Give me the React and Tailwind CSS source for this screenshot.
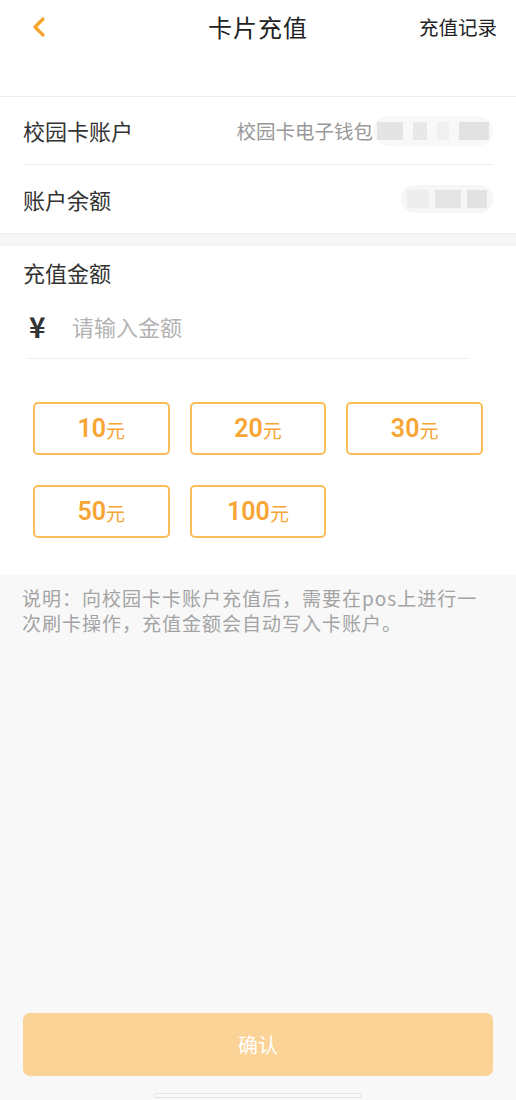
import React, { useState } from "react";

const amounts = [10, 20, 30, 50, 100];

const App = () => {
  const [amount, setAmount] = useState("");

  return (
    <div
      className="w-[516px] h-[1100px] bg-[#f8f8f8] flex flex-col"
      style={{ fontFamily: '"Noto Sans CJK SC", "Noto Sans", sans-serif' }}
    >
      {/* Header */}
      <div className="bg-white h-[97px] border-b border-[#eeeeee] flex items-start pt-[8px] px-[22px]">
        <div className="relative w-full h-[38px] flex items-center justify-center">
          <button className="absolute left-[8px] top-[8px]">
            <svg width="18" height="22" viewBox="0 0 18 22" fill="none">
              <path
                d="M13 3L5 11l8 8"
                stroke="#f5a32c"
                strokeWidth="3.2"
                strokeLinecap="round"
                strokeLinejoin="round"
              />
            </svg>
          </button>
          <span className="text-[24px] text-[#222] tracking-[1px]">卡片充值</span>
          <span className="absolute right-[-3px] text-[19.5px] text-[#222]">充值记录</span>
        </div>
      </div>

      {/* Account info */}
      <div className="bg-white px-[23px]">
        <div className="h-[68px] flex items-center justify-between border-b border-[#eeeeee]">
          <span className="text-[22px] text-[#333]">校园卡账户</span>
          <div className="flex items-center">
            <span className="text-[19.5px] text-[#999]">校园卡电子钱包</span>
            <div className="flex items-center h-[30px] rounded-full bg-[#f8f8f8] px-[4px] gap-[10px]">
              <div className="w-[26px] h-[18px] bg-[#e4e4e4]"></div>
              <div className="w-[14px] h-[18px] bg-[#e8e8e8]"></div>
              <div className="w-[12px] h-[18px] bg-[#f0f0f0]"></div>
              <div className="w-[30px] h-[18px] bg-[#e2e2e2]"></div>
            </div>
          </div>
        </div>
        <div className="h-[68px] flex items-center justify-between">
          <span className="text-[22px] text-[#333]">账户余额</span>
          <div className="flex items-center h-[28px] rounded-full bg-[#f6f6f6] px-[6px] gap-[6px]">
            <div className="w-[22px] h-[18px] bg-[#ededed]"></div>
            <div className="w-[26px] h-[18px] bg-[#e5e5e5]"></div>
            <div className="w-[20px] h-[18px] bg-[#e2e2e2]"></div>
          </div>
        </div>
      </div>

      <div className="h-[13px] bg-[#f6f6f6] border-y border-[#eeeeee]"></div>

      {/* Amount */}
      <div className="bg-white px-[23px] pt-[11px] pb-[37px]">
        <div className="text-[22px] text-[#333] leading-[30px]">充值金额</div>
        <div className="ml-[5px] mr-[24px] mt-[13px] h-[59px] flex items-center border-b border-[#eeeeee] pb-[6px]">
          <span className="text-[28px] font-bold text-[#333] w-[44px] pl-[1px]">¥</span>
          <input
            type="text"
            value={amount}
            onChange={(e) => setAmount(e.target.value)}
            placeholder="请输入金额"
            className="flex-1 text-[22px] text-[#333] placeholder-[#b3b3b3] outline-none bg-transparent"
          />
        </div>
        <div className="grid grid-cols-3 gap-x-[20px] gap-y-[30px] mt-[43px] px-[10px]">
          {amounts.map((a) => (
            <button
              key={a}
              onClick={() => setAmount(String(a))}
              className="h-[53px] border-2 border-[#fbbd58] rounded-[5px] flex items-center justify-center text-[#f7a534]"
            >
              <span className="text-[25px] font-semibold" style={{ fontFamily: '"Roboto", sans-serif' }}>
                {a}
              </span>
              <span className="text-[19px] mt-[3px]">元</span>
            </button>
          ))}
        </div>
      </div>

      {/* Note */}
      <div className="px-[22px] pt-[10px] text-[19px] tracking-[1px] leading-[25px] text-[#a3a3a3]">
        说明：向校园卡卡账户充值后，需要在pos上进行一次刷卡操作，充值金额会自动写入卡账户。
      </div>

      <div className="flex-1"></div>

      {/* Confirm */}
      <div className="px-[23px]">
        <button className="w-full h-[63px] rounded-[7px] bg-[#fbd396] text-white text-[20px]">
          确认
        </button>
      </div>
      <div className="flex justify-center pt-[17px] pb-[2px]">
        <div className="w-[208px] h-[5px] rounded-full border border-[#e2e2e2] bg-[#fafafa]"></div>
      </div>
    </div>
  );
};

export default App;
